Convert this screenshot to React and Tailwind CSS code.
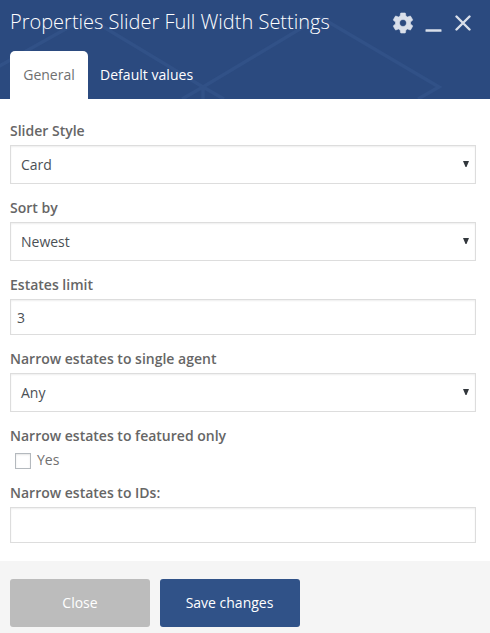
import React from 'react';

const LABEL = 'block h-5 text-[14px] leading-5 font-semibold text-[#666666] mb-1';
const BOX = 'w-full border border-[#dddddd] bg-white text-[14px] text-[#4b5055] shadow-[inset_0_1px_2px_rgba(0,0,0,0.07)]';

function HeaderLines() {
  return (
    <svg className="absolute inset-0 pointer-events-none" width="490" height="99" viewBox="0 0 490 99" fill="none" stroke="#315187" strokeWidth="3.5">
      <path d="M-4 68 L87 17 L203 87 L320 17 L439 87 L418 99" />
      <path d="M182 99 L203 87 L224 99 M203 87 V99" />
    </svg>
  );
}

function SelectField({ label, value }) {
  return (
    <div>
      <span className={LABEL}>{label}</span>
      <div className={`${BOX} h-[39px] pl-[10px] pr-[6px] flex items-center justify-between`}>
        <span>{value}</span>
        <svg width="6" height="6" viewBox="0 0 6 6" className="mb-[2px]">
          <path d="M0 0 H6 L3.5 6 H2.5 Z" fill="#32373c" />
        </svg>
      </div>
    </div>
  );
}

function TextField({ label, value }) {
  return (
    <div>
      <label className={LABEL}>{label}</label>
      <input type="text" defaultValue={value} className={`${BOX} block h-9 px-[6px] outline-none`} />
    </div>
  );
}

function WindowControls() {
  return (
    <div className="flex items-center text-[#d9dfea]">
      <svg width="24" height="24" viewBox="0 0 24 24" fill="currentColor" stroke="currentColor" strokeWidth="0.6" strokeLinejoin="round">
        <path d="M19.43 12.98c.04-.32.07-.64.07-.98s-.03-.66-.07-.98l2.11-1.65c.19-.15.24-.42.12-.64l-2-3.46c-.12-.22-.39-.3-.61-.22l-2.49 1c-.52-.4-1.08-.73-1.69-.98l-.38-2.65C14.46 2.18 14.25 2 14 2h-4c-.25 0-.46.18-.49.42l-.38 2.65c-.61.25-1.17.59-1.69.98l-2.49-1c-.23-.09-.49 0-.61.22l-2 3.46c-.13.22-.07.49.12.64l2.11 1.65c-.04.32-.07.65-.07.98s.03.66.07.98l-2.11 1.65c-.19.15-.24.42-.12.64l2 3.46c.12.22.39.3.61.22l2.49-1c.52.4 1.08.73 1.69.98l.38 2.65c.03.24.24.42.49.42h4c.25 0 .46-.18.49-.42l.38-2.65c.61-.25 1.17-.59 1.69-.98l2.49 1c.23.09.49 0 .61-.22l2-3.46c.12-.22.07-.49-.12-.64l-2.11-1.65zM12 15.5c-1.93 0-3.5-1.57-3.5-3.5s1.57-3.5 3.5-3.5 3.5 1.57 3.5 3.5-1.57 3.5-3.5 3.5z" />
      </svg>
      <svg width="17" height="17" viewBox="0 0 17 17" className="ml-[10px]" fill="currentColor">
        <rect x="0.5" y="14.2" width="16" height="2.6" rx="0.6" />
      </svg>
      <svg width="16" height="16" viewBox="0 0 16 16" className="ml-[13px]" fill="none" stroke="currentColor" strokeWidth="2.4" strokeLinecap="round">
        <path d="M1.5 1.5 L14.5 14.5 M14.5 1.5 L1.5 14.5" />
      </svg>
    </div>
  );
}

export default function App() {
  return (
    <div className="w-[490px] h-[633px] bg-white flex flex-col font-['Open_Sans','Noto_Sans',sans-serif] overflow-hidden">
      <header className="relative h-[99px] bg-[#2b4a7f] flex flex-col justify-between shrink-0">
        <HeaderLines />
        <div className="relative h-[46px] pl-[10px] pr-[19px] flex items-center justify-between">
          <h1 className="text-[20px] leading-[26px] font-light text-white mb-[2px]">Properties Slider Full Width Settings</h1>
          <WindowControls />
        </div>
        <nav className="relative flex h-12 pl-[10px] text-[14px]">
          <button className="w-[78px] pb-[2px] bg-white text-[#707070] rounded-t-[5px]">General</button>
          <button className="px-3 pb-[2px] text-white font-medium tracking-[0.03px]">Default values</button>
        </nav>
      </header>

      <main className="flex-1 pl-[10px] pr-[14px] pt-[22px] flex flex-col gap-[14px]">
        <SelectField label="Slider Style" value="Card" />
        <SelectField label="Sort by" value="Newest" />
        <TextField label="Estates limit" value="3" />
        <SelectField label="Narrow estates to single agent" value="Any" />
        <div>
          <span className={LABEL}>Narrow estates to featured only</span>
          <label className="flex h-[19px] pl-[5px] text-[14px] text-[#707070]">
            <span className="mt-[3px] mr-[6px] w-4 h-4 border border-[#b4b9be] bg-white shadow-[inset_0_1px_2px_rgba(0,0,0,0.1)]" />
            <span className="leading-5">Yes</span>
          </label>
        </div>
        <TextField label="Narrow estates to IDs:" value="" />
      </main>

      <footer className="h-[72px] shrink-0 bg-[#f5f5f5] pl-[10px] pt-[18px] flex items-start gap-[10px] text-[14px] text-white">
        <button className="w-[140px] h-12 pb-[2px] bg-[#bcbcbc] rounded-[3px]">Close</button>
        <button className="w-[140px] h-12 pb-[2px] pr-px bg-[#305288] rounded-[3px]">Save changes</button>
      </footer>
    </div>
  );
}
